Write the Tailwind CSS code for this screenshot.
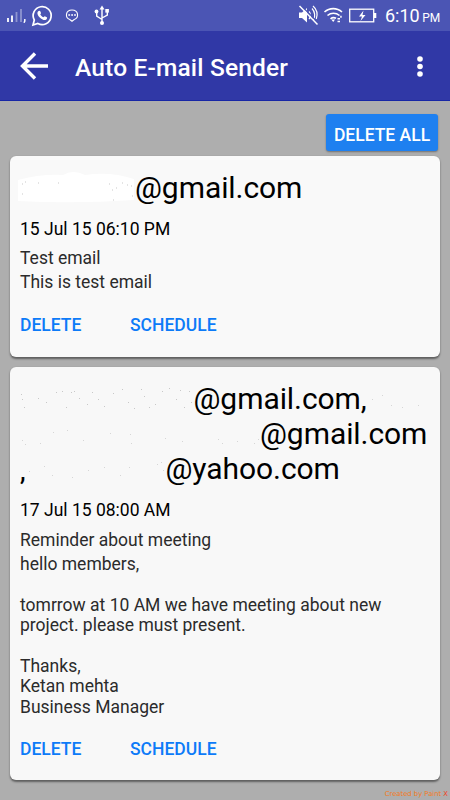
<!DOCTYPE html>
<html lang="en">
<head>
  <meta charset="UTF-8">
  <meta name="viewport" content="width=device-width, initial-scale=1.0">
  <title>Auto E-mail Sender</title>
  <script src="https://cdn.jsdelivr.net/npm/@tailwindcss/browser@4"></script>
</head>
<body class="relative w-[450px] h-[800px] overflow-hidden bg-[#aeaeae] font-[Roboto,sans-serif] text-[17.5px] leading-[20.4px] text-[#2b2b2b] whitespace-nowrap">
  <!-- Status bar -->
  <div class="h-[31px] bg-[#4b55b4] text-white flex items-center justify-between">
    <svg class="w-[112px] h-[31px]" viewBox="0 0 112 31" fill="none">
      <path d="M8 18v4M12 15.500v6.500" stroke="#fff" stroke-width="1.800"/>
      <path d="M16.500 12v10M21 9v13" stroke="#8e95d0" stroke-width="1.800"/>
      <path d="M24.800 19v2l-.8 1.800" stroke="#fff" stroke-width="1.500"/>
      <path d="M33 25l1.300-5a9 9 0 1 1 3.500 3.500z" stroke="#fff" stroke-width="1.700"/>
      <path d="M38.200 11.300c.8-1 1.900-.8 2.200.2l.6 1.500c.2.500-.8 1.200-.7 1.600.6 1.200 1.700 2.200 3 2.700.5.100 1-1.100 1.500-1l2 1c.8.500.1 2.200-1.300 2.700-3.300.8-8.300-4-8.100-7 .1-.7.400-1.300.8-1.700z" fill="#fff"/>
      <path d="M69.800 19.500c-5-1.500-4.500-9.500 2.200-9.500s7.200 8 2.200 9.500L72 21.200z" stroke="#fff" stroke-width="1.100"/>
      <path d="M68.300 15h1.800M71.200 15H73M74.100 15h1.800" stroke="#fff" stroke-width="1.600"/>
      <path d="M102 9v14M102 19.500l-5.300-3.300V12M102 18l5.300-3V11" stroke="#fff" stroke-width="1.400"/>
      <path d="M102 5.500l2.500 4h-5z" fill="#fff"/>
      <circle cx="102" cy="23" r="2" fill="#fff"/>
      <circle cx="96.500" cy="11.500" r="1.900" fill="#fff"/>
      <path d="M105.300 9h3.600v3.600h-3.600z" fill="#fff"/>
    </svg>
    <div class="flex items-center">
      <svg class="w-[90px] h-[31px]" viewBox="290 0 90 31" fill="none">
        <path d="M299 12.500h3l5-4.500v14.500l-5-4.500h-3z" fill="#fff"/>
        <path d="M309 11.500c2 2 2 5.500 0 7.500M312 8.500c3 3 3.500 8 1.500 12M313 6c4 3.500 5 8 3.300 13" stroke="#fff" stroke-width="1.200"/>
        <path d="M300.700 5.300l18 18" stroke="#4b55b4" stroke-width="1.300"/>
        <path d="M299.500 6l18 18.500" stroke="#fff" stroke-width="1.500"/>
        <path d="M324.500 12c5-4.500 12.500-4.500 17.500 0M327.500 15.500c3.500-3 8.500-3 12 0M330.500 18.800c2-1.600 3.500-1.600 5.500-.5" stroke="#fff" stroke-width="1.600"/>
        <path d="M331.300 19.500h3.800l-1.900 2.500zM337.500 18h2.500v1.500h-2.500zM337.500 20.800h2.500v1.500h-2.500zM340.200 15.800h1.500v2h-1.500z" fill="#fff"/>
        <rect x="349.700" y="9.200" width="24" height="12.600" stroke="#fff" stroke-width="1.300"/>
        <path d="M374 13h2.300v5H374z" fill="#fff"/>
        <path d="M363.500 10.500l-4.500 6h3l-1.500 4.500 5-6h-3z" fill="#fff"/>
      </svg>
      <div class="w-[70px] pl-[5px] pt-[4px] flex items-baseline">
        <span class="text-[18px]">6:10</span>
        <span class="text-[12px] ml-[2.500px]">PM</span>
      </div>
    </div>
  </div>

  <!-- App bar -->
  <div class="h-[70px] bg-[#3038a6] border-b border-[#1726a5] text-white flex items-center">
    <svg class="w-[28px] h-[28px] ml-5 mt-px" viewBox="0 0 28 28" fill="none" stroke="#fff" stroke-width="3.400">
      <path d="M15 1.500L2.500 14L15 26.500M2.500 14H28"/>
    </svg>
    <h1 class="ml-[27px] mt-1 w-[335px] text-[24.500px] leading-[30px] font-medium tracking-[0.17px]">Auto E-mail Sender</h1>
    <svg class="w-[20px] h-[30px]" viewBox="0 0 20 30" fill="#fff">
      <circle cx="10" cy="8" r="2.800"/>
      <circle cx="10" cy="15.500" r="2.800"/>
      <circle cx="10" cy="23" r="2.800"/>
    </svg>
  </div>

  <!-- Content -->
  <main class="pl-[10px] pr-[10px] pt-[13px] flex flex-col">
    <button class="self-end mr-[2px] w-[112px] h-[37px] rounded-[3px] bg-[#1e80f0] text-white font-medium pt-[5px] shadow-[0_1px_2px_rgba(0,0,0,0.35)]">DELETE ALL</button>

    <section class="relative mt-[5px] h-[201px] rounded-[6px] bg-[#f9f9f9] px-[10px] pt-[14px] shadow-[0_1.5px_2px_rgba(0,0,0,0.45)]">
      <svg class="absolute left-[5px] top-[10px] w-[125px] h-[42px]" viewBox="0 0 125 42">
        <path d="M3 14Q25 8 48 9Q58 3 70 9Q95 5 119 13V34Q60 38 3 35z" fill="#fff"/>
        <path d="M7 18h1M10 16h1M7 28h1M23 17h1M43 17h1M94 18h1M97 24h1M101 22h1M107 17h1M112 19h1M98 34h1M116 20h1M117 30h1" stroke="#c9c9c9"/>
      </svg>
      <p class="relative ml-[115px] text-[30px] leading-[35px] tracking-[-0.07px] text-black">@gmail.com</p>
      <p class="mt-[14px] text-black">15 Jul 15 06:10 PM</p>
      <p class="mt-[9px]">Test email</p>
      <p class="mt-[3.600px]">This is test email</p>
      <div class="mt-[22.600px] flex font-medium text-[#0d7bf8]">
        <button class="w-[110px] text-left">DELETE</button>
        <button>SCHEDULE</button>
      </div>
    </section>

    <section class="relative mt-[10px] h-[413px] rounded-[6px] bg-[#f8f8f8] px-[10px] pt-[14px] shadow-[0_1.5px_2px_rgba(0,0,0,0.45)]">
      <svg class="absolute left-0 top-0 w-[430px] h-[125px]" viewBox="10 367 430 125" stroke="#c8c8c8">
        <path d="M21 394.500h1M22 399.500h1M24 407.500h1M38 398.500h1M46 402.500h1M56 392.500h1M62 391.500h1M66 407.500h1M71 392.500h1M74 391.500h1M79 398.500h1M87 404.500h1M92 392.500h1M98 399.500h1M104 406.500h1M113 393.500h1M122 389.500h1M128 402.500h1M134 408.500h1M141 389.500h1M144 396.500h1M149 407.500h1M155 404.500h1M162 391.500h1M169 388.500h1M176 399.500h1M180 390.500h1M184 407.500h1M189 391.500h1M191 402.500h1"/>
        <path d="M372 399.500h1M382 395.500h1M391 405.500h1M402 407.500h1M418 405.500h1M22 440.500h1M25 444.500h1M40 443.500h1M53 432.500h1M67 430.500h1M83 440.500h1M110 433.500h1M130 434.500h1M131 443.500h1M165 438.500h1M182 441.500h1M218 439.500h1M222 443.500h1M237 441.500h1M254 443.500h1M258 439.500h1" stroke="#d6d6d6"/>
        <path d="M29 471.500h1M44 466.500h1M52 475.500h1M72 477.500h1M88 470.500h1M104 467.500h1M120 475.500h1M129 467.500h1M157 464.500h1M161 462.500h1M163 470.500h1" stroke="#d6d6d6"/>
      </svg>
      <div class="relative text-[30px] leading-[35px] tracking-[-0.07px] text-black">
        <p class="ml-[173.500px]">@gmail.com,</p>
        <p class="ml-[240px]">@gmail.com</p>
        <p class="flex h-[35px]"><span class="w-[145.500px] pt-[3px] text-[25px] font-medium">,</span>@yahoo.com</p>
      </div>
      <p class="mt-[14px] text-black">17 Jul 15 08:00 AM</p>
      <p class="mt-[9.600px]">Reminder about meeting</p>
      <p class="mt-[3.600px] whitespace-pre-line">hello members,

        tomrrow at 10 AM we have meeting about new
        project. please must present.

        Thanks,
        Ketan mehta
        Business Manager</p>
      <div class="mt-[22px] flex font-medium text-[#0d7bf8]">
        <button class="w-[110px] text-left">DELETE</button>
        <button>SCHEDULE</button>
      </div>
    </section>
  </main>

  <p class="absolute right-[2px] bottom-[2px] font-[DejaVu_Sans,sans-serif] text-[6.800px] leading-[8px] text-[#f47a1c]">Created by Paint <span class="text-[#f04020]">X</span></p>
</body>
</html>
